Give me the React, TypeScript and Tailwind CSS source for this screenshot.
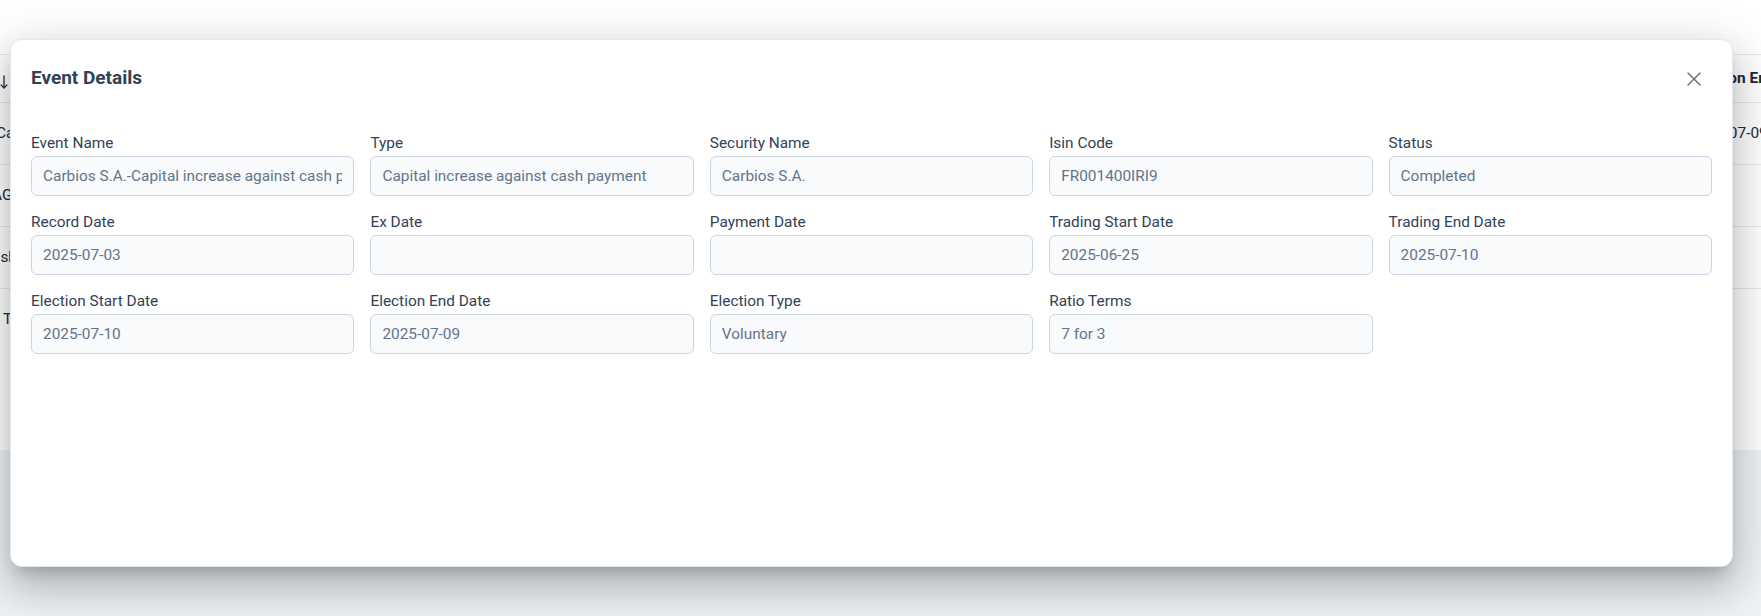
import { X } from 'lucide-react';

const fields: { label: string; value: string }[] = [
  { label: 'Event Name', value: 'Carbios S.A.-Capital increase against cash payment' },
  { label: 'Type', value: 'Capital increase against cash payment' },
  { label: 'Security Name', value: 'Carbios S.A.' },
  { label: 'Isin Code', value: 'FR001400IRI9' },
  { label: 'Status', value: 'Completed' },
  { label: 'Record Date', value: '2025-07-03' },
  { label: 'Ex Date', value: '' },
  { label: 'Payment Date', value: '' },
  { label: 'Trading Start Date', value: '2025-06-25' },
  { label: 'Trading End Date', value: '2025-07-10' },
  { label: 'Election Start Date', value: '2025-07-10' },
  { label: 'Election End Date', value: '2025-07-09' },
  { label: 'Election Type', value: 'Voluntary' },
  { label: 'Ratio Terms', value: '7 for 3' },
];

// rows of the table that sits behind the dialog (only slivers show)
const rows = [
  { left: 'Carbios S.A.', shift: 'ml-[-4px]', right: '2025-07-09', border: true },
  { left: 'AGFA-Gevaert', shift: 'ml-[-8px]', right: '', border: true },
  { left: 'Cash', shift: 'ml-[-18px]', right: '', border: true },
  { left: 'TotalEnergies', shift: 'ml-[3px]', right: '', border: false },
];

function SortArrow() {
  return (
    <svg width="8" height="14" viewBox="0 0 8 14" fill="none" stroke="#1f2937" strokeWidth="1.3">
      <path d="M4 0.5V13" />
      <path d="M0.8 9.6L4 13L7.2 9.6" />
    </svg>
  );
}

function BackgroundTable() {
  return (
    <div className="h-[450px] bg-white pt-[54px] text-[15.4px] text-[#1f2937]">
      <div className="flex h-[49px] items-center justify-between border-y border-[#e5e7eb]">
        <span className="mt-[6px]">
          <SortArrow />
        </span>
        <span className="w-[71px] whitespace-nowrap font-bold">Election End Date</span>
      </div>
      {rows.map((r, i) => (
        <div
          key={i}
          className={`flex h-[62px] items-center justify-between ${r.border ? 'border-b border-[#e5e7eb]' : ''}`}
        >
          <span className={`whitespace-nowrap ${r.shift}`}>{r.left}</span>
          <span className="w-[71px] whitespace-nowrap">{r.right}</span>
        </div>
      ))}
    </div>
  );
}

function Field({ label, value }: { label: string; value: string }) {
  return (
    <div className="flex flex-col">
      <label className="mb-1 text-[15.4px] leading-[18px] text-[#334155]">{label}</label>
      <input
        readOnly
        value={value}
        className="h-10 w-full rounded-[6px] border border-[#cbd5e1] bg-[#f8fafc] px-[11px] text-[15.4px] text-[#64748b] outline-none"
      />
    </div>
  );
}

export default function App() {
  return (
    <div className="relative h-[616px] w-[1761px] overflow-hidden bg-[#eef2f7] font-['Roboto',sans-serif]">
      <BackgroundTable />

      {/* Dialog */}
      <div className="absolute left-[10px] top-[39px] h-[528px] w-[1723px] rounded-[12px] border border-[#e2e8f0] bg-white shadow-[0_11px_15px_-7px_rgba(0,0,0,0.2),0_24px_38px_3px_rgba(0,0,0,0.14),0_9px_46px_8px_rgba(0,0,0,0.12)]">
        <div className="flex items-start justify-between px-5 pt-5">
          <h2 className="mt-[4px] text-[19px] leading-7 font-bold text-[#334155]">Event Details</h2>
          <button className="mt-[1px] rounded-md p-1.5 text-[#64748b] hover:bg-gray-100" aria-label="Close">
            <X className="h-6 w-6" strokeWidth={1.5} />
          </button>
        </div>

        <div className="mt-[37px] grid grid-cols-5 gap-x-4 gap-y-[17px] px-5">
          {fields.map((f) => (
            <Field key={f.label} label={f.label} value={f.value} />
          ))}
        </div>
      </div>
    </div>
  );
}
